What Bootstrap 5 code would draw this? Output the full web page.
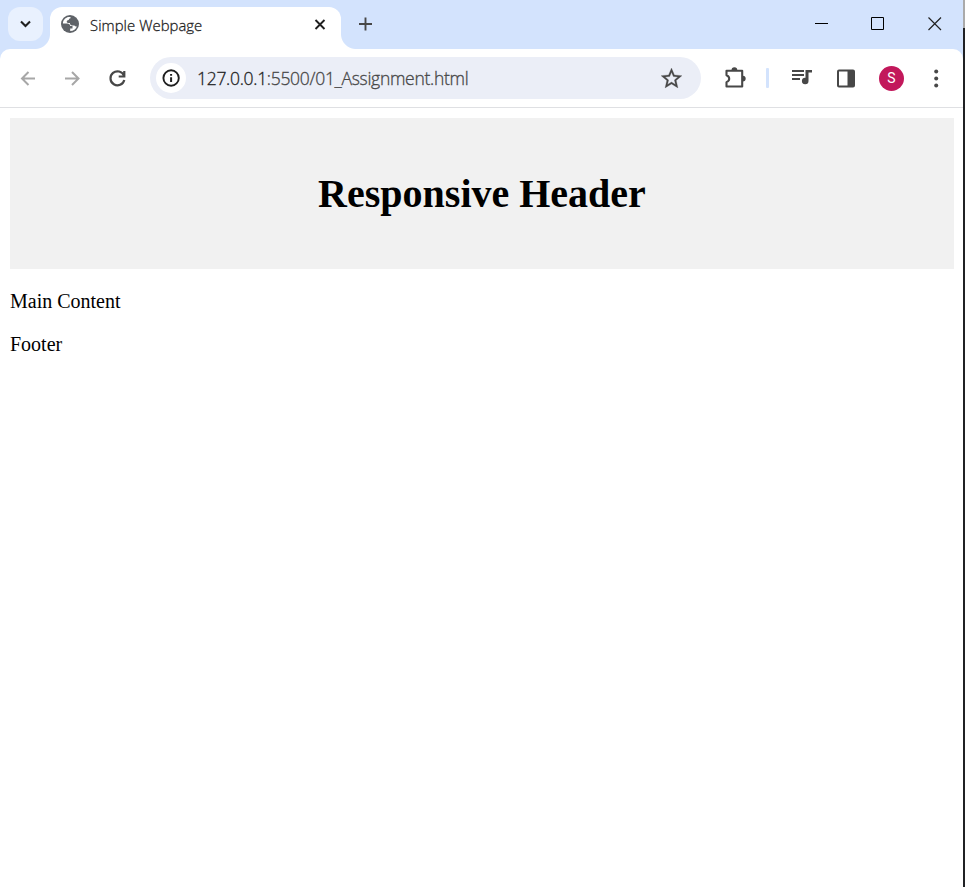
<!DOCTYPE html>
<html lang="en">
<head>
<meta charset="utf-8">
<meta name="viewport" content="width=device-width, initial-scale=1">
<title>Simple Webpage</title>
<link href="https://cdn.jsdelivr.net/npm/bootstrap@5.3.0/dist/css/bootstrap.min.css" rel="stylesheet">
<style>
html, body { height: 100%; overflow: hidden; }
svg { display: block; flex: none; }
.window-pane { width: 963px; background: #fff; }
.desktop-edge { width: 2px; background: linear-gradient(#aaa 0 28px, #202124 28px); }
.titlebar { height: 49px; background: #d3e3fd; }
.tab-search { width: 35px; height: 34px; margin: 7px 7px 0 8px; border-radius: 12px; background: #e9f1fe; }
.browser-tab { width: 290.5px; height: 42px; margin-top: 7px; background: #fff; border-radius: 12px 12px 0 0; padding: 0 13px 7px 10px; }
.browser-tab::before, .browser-tab::after { content: ""; position: absolute; bottom: 0; width: 15px; height: 15px; }
.browser-tab::before { left: -15px; background: radial-gradient(circle at 0 0, transparent 14.5px, #fff 15.5px); }
.browser-tab::after { right: -15px; background: radial-gradient(circle at 100% 0, transparent 14.5px, #fff 15.5px); }
.favicon { margin-bottom: 1px; }
.tab-title { font: 300 14.8px/20px "Open Sans", sans-serif; letter-spacing: .08px; margin-left: 10px; color: #1f1f1f; -webkit-text-stroke: .3px; }
.new-tab { margin: 14px 0 0 15.5px; }
.caption-buttons { margin: 14px 20px 0 0; gap: 37px; }
.toolbar-wrap { height: 59px; background: #d3e3fd; }
.toolbar-row { height: 59px; background: #fff; border-radius: 10px 10px 0 0; border-bottom: 1px solid #dfe0e3; padding-left: 15px; }
.nav-icons { gap: 20px; }
.omnibox { width: 551px; height: 42px; margin-left: 20px; border-radius: 21px; background: #ebeef7; padding: 0 17px 0 6px; }
.site-info { width: 30px; height: 30px; background: #fff; }
.address { font: 300 17.5px/24px "Open Sans", sans-serif; letter-spacing: -.29px; margin-left: 11px; color: #474747; white-space: nowrap; -webkit-text-stroke: .3px; }
.address b { font-weight: 300; color: #1f1f1f; }
.toolbar-actions { gap: 20px; margin-left: 21px; }
.toolbar-divider { width: 3px; height: 20px; margin-left: -1px; background: #d3e3fd; border-radius: 1px; }
.profile { width: 25px; height: 25px; background: #c2185b; font: 14px/25px Roboto, sans-serif; }
.document { padding: 10px 9px 0 10px; font: 20px/23px "Liberation Serif", serif; color: #000; }
.site-header { height: 151px; background: #f1f1f1; }
.site-header h1 { font: bold 40px/46px "Liberation Serif", serif; margin: 0; }
.main-copy { margin: 21px 0 20px; }
</style>
</head>
<body class="d-flex">
<div class="window-pane h-100">
  <div class="titlebar d-flex align-items-start">
    <div class="tab-search d-flex align-items-center justify-content-center">
      <svg width="12" height="8" viewBox="0 0 12 8" fill="none" stroke="#1f1f1f" stroke-width="2.1"><path d="M1 1.500 5.500 6l4.500-4.500"/></svg>
    </div>
    <div class="browser-tab position-relative d-flex align-items-center">
      <svg class="favicon" width="20" height="20" viewBox="0 0 20 20"><circle cx="10" cy="10" r="9" fill="#5f6368"/><path fill="#fff" d="M8.500 3C5 3.700 2.900 6.500 2.900 9.600h4.300c1.900 0 3 1 3 2.500h2.300v2.500h-2.300V17c3.300 0 5.800-2 6.700-4.600-1.200.2-2-.2-2.500-.9h-2.200c-1.500 0-2.300-.9-2.300-2.400H8.200C6.800 9.100 6.400 7.800 7 6.800c.4-.6 1-.9 1.800-.9 0-1 .7-1.400 1.700-1.600V3Z"/></svg>
      <span class="tab-title text-nowrap">Simple Webpage</span>
      <svg class="ms-auto" width="15" height="15" viewBox="0 0 15 15" stroke="#1f1f1f" stroke-width="1.9"><path d="m2.500 3 9 9m0-9-9 9"/></svg>
    </div>
    <svg class="new-tab" width="19" height="19" viewBox="0 0 19 19" stroke="#474747" stroke-width="1.9"><path d="M9.500 3.500v13M3 10h13"/></svg>
    <div class="caption-buttons d-flex ms-auto">
      <svg width="19" height="19" viewBox="0 0 19 19" stroke="#000"><path d="M3 9.500h13"/></svg>
      <svg width="19" height="19" viewBox="0 0 19 19" fill="none" stroke="#000"><path d="M3.500 3.500h12v12h-12z"/></svg>
      <svg width="19" height="19" viewBox="0 0 19 19" stroke="#222" stroke-width="1.2"><path d="m4.500 3.500 12.500 12.500m0-12.500L4.500 16"/></svg>
    </div>
  </div>
  <div class="toolbar-wrap">
    <div class="toolbar-row d-flex align-items-center">
      <div class="nav-icons d-flex">
        <svg width="25" height="25" viewBox="0 0 25 25" fill="none" stroke="#a7a7a7" stroke-width="2"><path d="M20 12.500H6.500m7-6.500L7 12.500l6.500 6.500"/></svg>
        <svg width="25" height="25" viewBox="0 0 25 25" fill="none" stroke="#a7a7a7" stroke-width="2"><path d="M5 12.500h13.500M12 6l6.500 6.500-6.500 6.500"/></svg>
        <svg width="25" height="25" viewBox="0 0 25 25" fill="none" stroke="#474747" stroke-width="2.200"><path d="M19 9.700A7 7 0 1 0 19.300 14M19.300 5v5.500h-5.600"/></svg>
      </div>
      <div class="omnibox d-flex align-items-center">
        <div class="site-info rounded-circle d-flex align-items-center justify-content-center">
          <svg width="18" height="18" viewBox="0 0 18 18"><circle cx="9.100" cy="9" r="7.700" fill="none" stroke="#1f1f1f" stroke-width="1.900"/><path fill="#1f1f1f" d="M8.100 5h2v1.800h-2zM8.100 8.200h2V13h-2z"/></svg>
        </div>
        <span class="address"><b>127.0.0.1</b>:5500/01_Assignment.html</span>
        <svg class="ms-auto" width="25" height="25" viewBox="0 0 24 24" fill="#474747" stroke="#474747" stroke-width=".25"><path d="M22 9.240l-7.190-.62L12 2 9.190 8.630 2 9.240l5.460 4.730L5.820 21 12 17.270 18.180 21l-1.630-7.030L22 9.240zM12 15.400l-3.760 2.270 1-4.280-3.320-2.880 4.380-.38L12 6.100l1.710 4.040 4.380.38-3.320 2.880 1 4.280L12 15.400z"/></svg>
      </div>
      <div class="toolbar-actions d-flex align-items-center">
        <svg width="25" height="25" viewBox="0 0 25 25"><path fill="none" stroke="#474747" stroke-width="2.100" stroke-linejoin="round" d="M4.500 4.800h15.700v15.700H4.500v-4.400c3.600-1.500 3.600-5.400 0-6.900Z"/><path fill="#474747" d="M9.500 4.200a2.900 2.900 0 0 1 5.800 0zM20.800 9.700a2.900 2.900 0 0 1 0 5.800z"/></svg>
        <span class="toolbar-divider"></span>
        <svg width="25" height="25" viewBox="0 0 25 25" fill="#474747"><path d="M3 4h12v2H3zM3 8h12v2H3zM3 12h8v2H3zM16.500 4H23v2.500h-3.500V15a3.300 3.300 0 1 1-3-3.300z"/></svg>
        <svg width="25" height="25" viewBox="0 0 25 25"><rect x="4" y="4.500" width="16" height="16" rx="1" fill="#fff" stroke="#474747" stroke-width="2"/><path fill="#474747" d="M13.500 4H20v17h-6.500z"/></svg>
        <span class="profile rounded-circle text-white text-center">S</span>
        <svg width="25" height="25" viewBox="0 0 25 25" fill="#474747"><circle cx="12.200" cy="5.500" r="2"/><circle cx="12.200" cy="12.500" r="2"/><circle cx="12.200" cy="19.500" r="2"/></svg>
      </div>
    </div>
  </div>
  <div class="document">
    <header class="site-header d-flex align-items-center justify-content-center"><h1>Responsive Header</h1></header>
    <main class="main-copy">Main Content</main>
    <footer>Footer</footer>
  </div>
</div>
<div class="desktop-edge h-100"></div>
<script src="https://cdn.jsdelivr.net/npm/bootstrap@5.3.0/dist/js/bootstrap.bundle.min.js"></script>
</body>
</html>
